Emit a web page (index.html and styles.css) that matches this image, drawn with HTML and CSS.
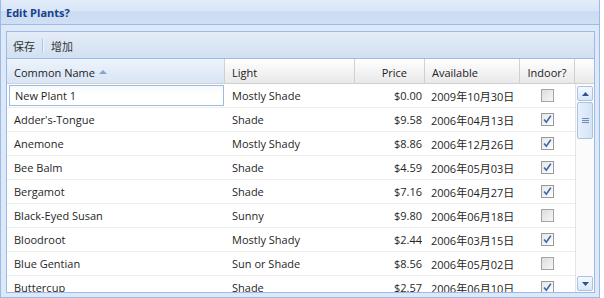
FILE: index.html
```html
<!DOCTYPE html>
<html>
<head>
<meta charset="utf-8">
<link rel="stylesheet" href="styles.css">
</head>
<body>
<div class="panel">
  <div class="panel-header"><span class="title">Edit Plants?</span></div>
  <div class="panel-body">
    <div class="grid">
      <div class="toolbar">
        <span class="tb-btn">保存</span>
        <span class="tb-sep"></span>
        <span class="tb-btn">增加</span>
      </div>
      <div class="grid-header">
        <div class="hcell sorted">Common Name<svg class="sort-icon" width="8" height="5" viewBox="0 0 8 5"><path d="M0 5 L4 1 L8 5 Z" fill="#8aa4c8"/></svg></div>
        <div class="hcell">Light</div>
        <div class="hcell right">Price</div>
        <div class="hcell">Available</div>
        <div class="hcell center">Indoor?</div>
        <div class="hcell filler"></div>
      </div>
      <div class="grid-body">
        <div class="rows">
          <div class="row">
            <div class="cell editing"><span class="editor">New Plant 1</span></div>
            <div class="cell">Mostly Shade</div>
            <div class="cell price">$0.00</div>
            <div class="cell date">2009年10月30日</div>
            <div class="cell check"><span class="cb"></span></div>
          </div>
          <div class="row">
            <div class="cell">Adder's-Tongue</div>
            <div class="cell">Shade</div>
            <div class="cell price">$9.58</div>
            <div class="cell date">2006年04月13日</div>
            <div class="cell check"><span class="cb checked"><svg width="11" height="11" viewBox="0 0 11 11"><path d="M2 5.5 L4.3 8.2 L8.8 1.8" fill="none" stroke="#3c67a8" stroke-width="1.6"/></svg></span></div>
          </div>
          <div class="row">
            <div class="cell">Anemone</div>
            <div class="cell">Mostly Shady</div>
            <div class="cell price">$8.86</div>
            <div class="cell date">2006年12月26日</div>
            <div class="cell check"><span class="cb checked"><svg width="11" height="11" viewBox="0 0 11 11"><path d="M2 5.5 L4.3 8.2 L8.8 1.8" fill="none" stroke="#3c67a8" stroke-width="1.6"/></svg></span></div>
          </div>
          <div class="row">
            <div class="cell">Bee Balm</div>
            <div class="cell">Shade</div>
            <div class="cell price">$4.59</div>
            <div class="cell date">2006年05月03日</div>
            <div class="cell check"><span class="cb checked"><svg width="11" height="11" viewBox="0 0 11 11"><path d="M2 5.5 L4.3 8.2 L8.8 1.8" fill="none" stroke="#3c67a8" stroke-width="1.6"/></svg></span></div>
          </div>
          <div class="row">
            <div class="cell">Bergamot</div>
            <div class="cell">Shade</div>
            <div class="cell price">$7.16</div>
            <div class="cell date">2006年04月27日</div>
            <div class="cell check"><span class="cb checked"><svg width="11" height="11" viewBox="0 0 11 11"><path d="M2 5.5 L4.3 8.2 L8.8 1.8" fill="none" stroke="#3c67a8" stroke-width="1.6"/></svg></span></div>
          </div>
          <div class="row">
            <div class="cell">Black-Eyed Susan</div>
            <div class="cell">Sunny</div>
            <div class="cell price">$9.80</div>
            <div class="cell date">2006年06月18日</div>
            <div class="cell check"><span class="cb"></span></div>
          </div>
          <div class="row">
            <div class="cell">Bloodroot</div>
            <div class="cell">Mostly Shady</div>
            <div class="cell price">$2.44</div>
            <div class="cell date">2006年03月15日</div>
            <div class="cell check"><span class="cb checked"><svg width="11" height="11" viewBox="0 0 11 11"><path d="M2 5.5 L4.3 8.2 L8.8 1.8" fill="none" stroke="#3c67a8" stroke-width="1.6"/></svg></span></div>
          </div>
          <div class="row">
            <div class="cell">Blue Gentian</div>
            <div class="cell">Sun or Shade</div>
            <div class="cell price">$8.56</div>
            <div class="cell date">2006年05月02日</div>
            <div class="cell check"><span class="cb"></span></div>
          </div>
          <div class="row">
            <div class="cell">Buttercup</div>
            <div class="cell">Shade</div>
            <div class="cell price">$2.57</div>
            <div class="cell date">2006年06月10日</div>
            <div class="cell check"><span class="cb checked"><svg width="11" height="11" viewBox="0 0 11 11"><path d="M2 5.5 L4.3 8.2 L8.8 1.8" fill="none" stroke="#3c67a8" stroke-width="1.6"/></svg></span></div>
          </div>
        </div>
        <div class="vscroll">
          <div class="sb-btn"><svg width="7" height="4" viewBox="0 0 7 4"><path d="M0 4 L3.5 0 L7 4 Z" fill="#2b5594"/></svg></div>
          <div class="sb-thumb"><svg width="7" height="5" viewBox="0 0 7 5"><path d="M0 0.5 H7 M0 2.5 H7 M0 4.5 H7" stroke="#6d8bb8" stroke-width="1"/></svg></div>
          <div class="sb-track"></div>
          <div class="sb-btn"><svg width="7" height="4" viewBox="0 0 7 4"><path d="M0 0 L3.5 4 L7 0 Z" fill="#2b5594"/></svg></div>
        </div>
      </div>
    </div>
  </div>
</div>
</body>
</html>
```

FILE: styles.css
```css
* { box-sizing: border-box; }
html, body {
  margin: 0;
  padding: 0;
  background: #ffffff;
}
body {
  font-family: "Open Sans", "Noto Sans CJK SC", sans-serif;
  font-size: 11px;
  color: #1f1f1f;
  width: 604px;
  height: 298px;
  overflow: hidden;
}
.panel {
  width: 600px;
  height: 298px;
  border: 1px solid #99bbe8;
  border-top: 0;
  background: #dfe8f6;
  display: flex;
  flex-direction: column;
}
.panel-header {
  height: 25px;
  flex: none;
  border-bottom: 1px solid #99bbe8;
  background: linear-gradient(#e2ecf9 0, #d9e6f7 45%, #cbdcf2 48%, #cfdff4 100%);
  display: flex;
  align-items: center;
  padding-left: 5px;
}
.title {
  font-weight: bold;
  color: #15428b;
  font-size: 11px;
}
.panel-body {
  flex: 1;
  padding: 6px 4px 4px 5px;
  display: flex;
  flex-direction: column;
}
.grid {
  height: 262px;
  border: 1px solid #99bbe8;
  background: #ffffff;
  display: flex;
  flex-direction: column;
  overflow: hidden;
}
.toolbar {
  height: 27px;
  flex: none;
  border-bottom: 1px solid #99bbe8;
  background: linear-gradient(#e4edf8, #d2e0f1);
  display: flex;
  align-items: center;
  padding: 2px 0 0 6px;
  gap: 7px;
  color: #333;
}
.tb-sep {
  width: 2px;
  height: 14px;
  border-left: 1px solid #a9c4e6;
  border-right: 1px solid #f2f7fd;
}
.grid-header {
  height: 25px;
  flex: none;
  display: grid;
  grid-template-columns: 218px 130px 70px 95px 55px 1fr;
  border-bottom: 1px solid #d0d0d0;
  background: linear-gradient(#ffffff, #f4f4f4 50%, #e9e9e9);
}
.hcell {
  border-right: 1px solid #d0d0d0;
  padding: 2px 6px 0 7px;
  display: flex;
  align-items: center;
  color: #222;
  white-space: nowrap;
}
.hcell.sorted {
  background: linear-gradient(#edf3fb, #d8e5f5);
}
.sort-icon {
  margin-left: 4px;
  margin-top: -1px;
}
.hcell.right { justify-content: flex-end; padding-right: 17px; }
.hcell.center { justify-content: center; padding: 2px 0 0 0; }
.hcell.filler { border-right: 0; }
.grid-body {
  flex: 1;
  display: flex;
  overflow: hidden;
}
.rows {
  width: 568px;
  flex: none;
}
.row {
  height: 24px;
  display: grid;
  grid-template-columns: 218px 130px 70px 95px 55px;
  border-bottom: 1px solid #ededed;
}
.cell {
  display: flex;
  align-items: center;
  padding: 0 4px 0 7px;
  white-space: nowrap;
  overflow: hidden;
}
.cell.editing { padding: 1px 0 1px 2px; }
.editor {
  width: 215px;
  height: 21px;
  border: 1px solid #9dbbe0;
  background: linear-gradient(#f7f9fc, #ffffff 40%);
  display: flex;
  align-items: center;
  padding-left: 5px;
}
.cell.price { justify-content: flex-end; padding-right: 3px; }
.cell.date { padding-left: 6px; }
.cell.check { justify-content: center; padding: 0 0 0 0; }
.cb {
  width: 13px;
  height: 13px;
  border: 1px solid #a4a4a4;
  background: linear-gradient(135deg, #dcdcdc, #f7f7f7);
  display: flex;
  align-items: center;
  justify-content: center;
}
.cb.checked {
  border-color: #9a9a9a;
  background: linear-gradient(135deg, #e6e6e6, #ffffff);
}
.vscroll {
  flex: 1;
  border-left: 1px solid #e4e4e4;
  background: #fbfbfb;
  padding: 2px 1px 1px 1px;
  display: flex;
  flex-direction: column;
  gap: 1px;
}
.sb-btn {
  height: 15px;
  flex: none;
  border: 1px solid #a9c3e3;
  border-radius: 2px;
  background: linear-gradient(#f5f9fe, #d9e6f6);
  display: flex;
  align-items: center;
  justify-content: center;
}
.sb-thumb {
  height: 37px;
  flex: none;
  border: 1px solid #a9c3e3;
  border-radius: 2px;
  background: linear-gradient(90deg, #e8f0fb, #d4e3f5);
  display: flex;
  align-items: center;
  justify-content: center;
}
.sb-track { flex: 1; }
```
